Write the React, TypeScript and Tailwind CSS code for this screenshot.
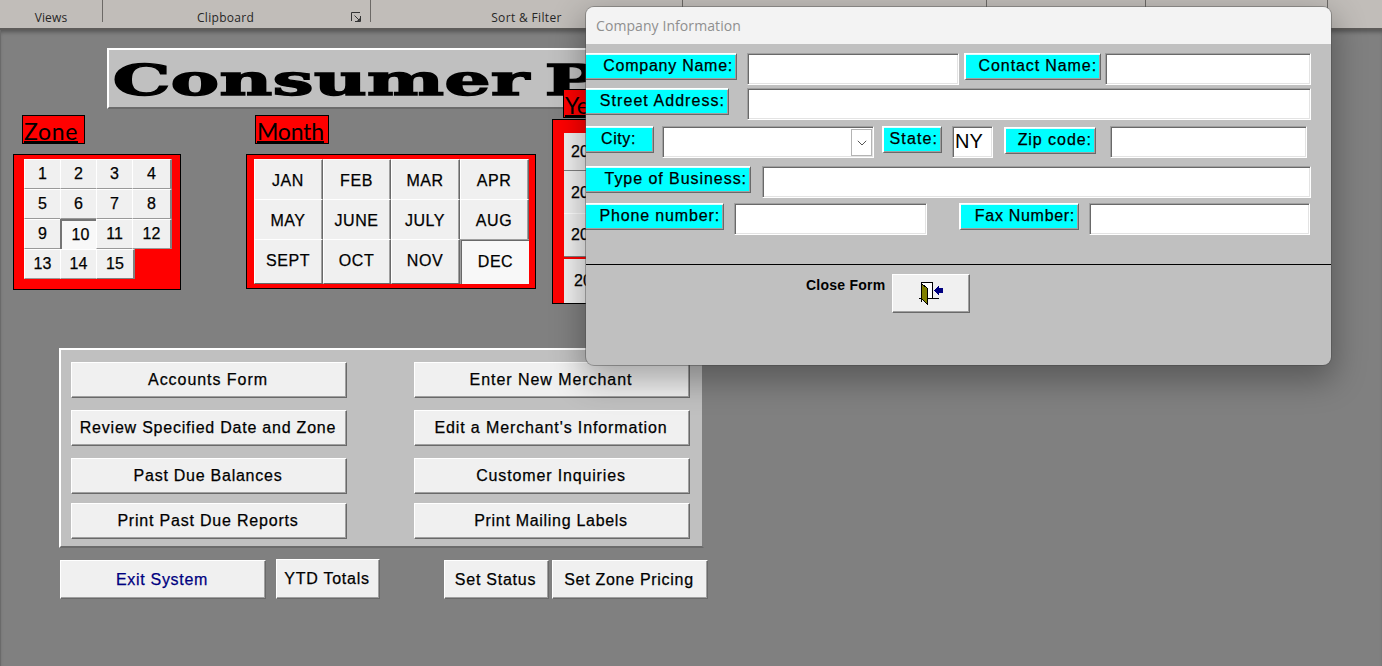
import React from "react";

const stroke = "[-webkit-text-stroke:0.25px_currentColor]";

function PushButton({ label, className = "", text = "" }: { label: string; className?: string; text?: string }) {
  return (
    <button
      className={`flex shrink-0 items-center justify-center whitespace-nowrap border border-t-white border-l-white border-b-[#696969] border-r-[#696969] bg-[#f0f0f0] pr-[2px] text-[16px] leading-none shadow-[inset_-1px_-1px_0_#a0a0a0] ${className}`}
    >
      <span className={`${stroke} ${text}`}>{label}</span>
    </button>
  );
}

function Tag({ label, className = "", text = "" }: { label: string; className?: string; text?: string }) {
  return (
    <div
      className={`flex h-[27px] shrink-0 justify-end whitespace-nowrap border-t border-b border-r border-t-white border-b-[#696969] border-r-[#696969] bg-[#00ffff] pt-px text-[16px] leading-[22px] shadow-[inset_0_1px_0_#d8ffff,inset_-1px_-1px_0_#a0a0a0] ${className}`}
    >
      <span className={`${stroke} ${text}`}>{label}</span>
    </div>
  );
}

function Field({ className = "", children }: { className?: string; children?: React.ReactNode }) {
  return (
    <div
      className={`flex h-[32px] shrink-0 border border-t-[#a0a0a0] border-l-[#a0a0a0] border-b-white border-r-white bg-white shadow-[inset_1px_1px_0_#696969,inset_-1px_-1px_0_#e3e3e3] ${className}`}
    >
      {children}
    </div>
  );
}

function Heading({ label, className = "", text = "" }: { label: string; className?: string; text?: string }) {
  return (
    <div className={`flex h-[29px] items-start overflow-hidden whitespace-nowrap border border-black bg-[#ff0000] pl-px font-['Lato','Liberation_Sans',sans-serif] text-[23px] leading-[30px] ${className}`}>
      <span className={`h-[27px] border-b-2 border-black ${text}`}>{label}</span>
    </div>
  );
}

const months = ["JAN", "FEB", "MAR", "APR", "MAY", "JUNE", "JULY", "AUG", "SEPT", "OCT", "NOV", "DEC"];
const zones = Array.from({ length: 15 }, (_, i) => i + 1);

function monthStyle(m: string) {
  if (m === "DEC")
    return "border-t border-l border-[#a0a0a0] bg-[#f8f8f8] pl-px shadow-[inset_1px_1px_0_#696969]";
  if (m === "SEPT" || m === "OCT" || m === "NOV")
    return "border border-t-white border-l-white border-r-[#696969] border-b-[#696969] bg-[#f0f0f0] pr-px pb-[2px] shadow-[inset_-1px_0_0_#a0a0a0]";
  return "border-t border-l border-r border-t-white border-l-white border-r-[#696969] bg-[#f0f0f0] pt-[2px] pr-px shadow-[inset_-1px_0_0_#a0a0a0]";
}

function zoneStyle(z: number) {
  if (z === 10)
    return "w-[36px] border-t-2 border-l-2 border-[#757575] bg-[#f8f8f8] pl-[3px]";
  if (z % 4 === 0)
    return "w-[40px] border-t border-l border-b border-r-2 border-t-white border-l-white border-b-[#999] border-r-[#808080] bg-[#f0f0f0]";
  if (z === 15)
    return "w-[39px] border-t border-l border-b border-r-2 border-t-white border-l-white border-b-[#808080] border-r-[#808080] bg-[#f0f0f0]";
  return "w-[36px] border-t border-l border-b border-t-white border-l-white border-b-[#999] bg-[#f0f0f0]";
}

export default function App() {
  return (
    <div className="relative flex h-[666px] w-[1382px] flex-col overflow-hidden bg-[#808080] font-['Liberation_Sans',Arial,sans-serif] text-black">
      <header className="flex h-[30px] shrink-0 border-b-2 border-[#5e5c5a] bg-[#c1bdb9] font-['Open_Sans','Noto_Sans',sans-serif] text-[12px] leading-[35px] tracking-[0.15px] text-[#262626]">
        <div className="h-[22px] w-[103px] border-r border-[#6c6966] text-center">Views</div>
        <div className="flex h-[22px] w-[268px] border-r border-[#6c6966] pl-[94px]">
          <span className="w-[154px] tracking-[0.3px]">Clipboard</span>
          <svg className="mt-[12px]" width="12" height="11" viewBox="0 0 12 11" fill="none" stroke="#333" strokeWidth="1">
            <path d="M.5 9V.5H9M3.500 3.500l5 5M9.500 4v5.500H4M6.500 8.500h2V6.500" />
          </svg>
        </div>
        <div className="h-[22px] w-[312px] border-r border-[#6c6966] text-center tracking-[0.35px]">Sort &amp; Filter</div>
        <div className="h-[22px] w-[304px] border-r border-[#6c6966]" />
        <div className="h-[22px] w-[159px] border-r border-[#6c6966]" />
        <div className="h-[22px] w-[182px] border-r border-[#6c6966]" />
      </header>

      <main className="flex w-full flex-1 flex-col border-l border-[#6a6a6a] shadow-[inset_0_4px_4px_-2px_rgba(0,0,0,0.35)]">
        <div className="mt-[18px] ml-[106px] h-[61px] w-[620px] shrink-0 overflow-hidden whitespace-nowrap border-2 border-t-white border-l-white border-b-[#6b6b6b] border-r-[#6b6b6b] bg-[#c0c0c0]">
          <div className="w-[400px] origin-left scale-x-[1.7] pl-[2px] font-['DejaVu_Serif',serif] text-[43px] leading-[61px] font-bold [word-spacing:-6px] [-webkit-text-stroke:1.3px_black]">
            Consumer P
          </div>
        </div>

        <section className="flex h-[239px] shrink-0">
          <div className="ml-[12px] w-[233px] pt-[6px]">
            <Heading label="Zone" className="ml-[9px] w-[63px]" text="tracking-[0.7px]" />
            <div className="mt-[10px] h-[136px] w-[168px] border border-black bg-[#ff0000] pt-[4px] pl-[10px]">
              <div className={`flex w-[148px] flex-wrap text-[16px] ${stroke}`}>
                {zones.map((z) => (
                  <button key={z} className={`flex h-[30px] items-center justify-center ${zoneStyle(z)}`}>
                    {z}
                  </button>
                ))}
              </div>
            </div>
          </div>
          <div className="w-[306px] pt-[6px]">
            <Heading label="Month" className="ml-[9px] w-[74px]" text="tracking-[-0.2px]" />
            <div className="mt-[10px] h-[135px] w-[290px] border border-black bg-[#ff0000] pt-[4px] pl-[7px]">
              <div className={`grid grid-cols-[69px_68px_69px_69px] grid-rows-[40px_40px_45px] text-[16px] tracking-[0.55px] ${stroke}`}>
                {months.map((m) => (
                  <button key={m} className={monthStyle(m)}>
                    {m}
                  </button>
                ))}
              </div>
            </div>
          </div>
          <div className="relative -mt-[20px] w-[140px]">
            <Heading label="Year" className="ml-[11px] w-[63px]" />
            <div className={`mt-px h-[185px] w-[120px] border border-black bg-[#ff0000] pt-[13px] pl-[11px] text-[16px] ${stroke}`}>
              <div className="h-[38px] border-b border-[#808080] bg-[#f0f0f0] pt-[7px] pl-[7px]">2020</div>
              <div className="h-[43px] border-b border-white bg-[#f0f0f0] pt-[10px] pl-[7px]">2021</div>
              <div className="h-[43px] border-b border-[#808080] bg-[#f0f0f0] pt-[9px] pl-[7px]">2022</div>
              <div className="mt-[2px] h-[44px] bg-[#f0f0f0] pt-[10px] pl-[10px]">2023</div>
            </div>
          </div>
        </section>

        <section className="ml-[58px] grid h-[200px] w-[645px] shrink-0 grid-cols-[343px_276px] grid-rows-[48px_48px_45px_37px] border-2 border-t-white border-l-white border-b-[#6b6b6b] border-r-[#808080] bg-[#c0c0c0] pt-[12px] pl-[10px]">
          <PushButton label="Accounts Form" className="h-[36px] w-[276px]" text="tracking-[0.95px]" />
          <PushButton label="Enter New Merchant" className="h-[36px] w-[276px]" text="tracking-[0.95px]" />
          <PushButton label="Review Specified Date and Zone" className="h-[36px] w-[276px]" text="tracking-[0.78px]" />
          <PushButton label="Edit a Merchant's Information" className="h-[36px] w-[276px]" text="tracking-[0.88px]" />
          <PushButton label="Past Due Balances" className="h-[36px] w-[276px]" text="tracking-[0.75px]" />
          <PushButton label="Customer Inquiries" className="h-[36px] w-[276px]" text="tracking-[0.85px]" />
          <PushButton label="Print Past Due Reports" className="h-[36px] w-[276px]" text="tracking-[0.8px]" />
          <PushButton label="Print Mailing Labels" className="h-[36px] w-[276px]" text="tracking-[0.7px]" />
        </section>

        <section className="mt-[11px] ml-[59px] flex">
          <PushButton label="Exit System" className="mt-[1px] h-[39px] w-[206px] text-[#000080]" text="tracking-[0.7px]" />
          <PushButton label="YTD Totals" className="ml-[10px] h-[40px] w-[104px]" text="tracking-[0.75px]" />
          <PushButton label="Set Status" className="mt-[1px] ml-[64px] h-[39px] w-[105px]" text="tracking-[0.75px]" />
          <PushButton label="Set Zone Pricing" className="mt-[1px] ml-[3px] h-[39px] w-[156px]" text="tracking-[0.7px]" />
        </section>
      </main>

      <div className="absolute top-[7px] left-[586px] flex h-[358px] w-[745px] flex-col overflow-hidden rounded-[8px] bg-[#c0c0c0] shadow-[0_12px_32px_4px_rgba(0,0,0,0.3),0_0_0_1px_rgba(90,90,90,0.45)]">
        <div className="h-[37px] shrink-0 bg-[#f3f3f3] pl-[10px] font-['Open_Sans','Noto_Sans',sans-serif] text-[14px] leading-[38px] tracking-[0.08px] text-[#8f8f8f]">
          Company Information
        </div>
        <div className="flex h-[35px] shrink-0 pt-[9px]">
          <Tag label="Company Name:" className="w-[151px] pr-[3px]" text="tracking-[0.75px]" />
          <Field className="ml-[10px] w-[212px]" />
          <Tag label="Contact Name:" className="ml-[5px] w-[137px] border-l-2 border-l-white pr-[3px]" text="tracking-[0.9px]" />
          <Field className="ml-[4px] w-[206px]" />
        </div>
        <div className="flex h-[38px] shrink-0 pt-[9px]">
          <Tag label="Street Address:" className="w-[143px] pr-[3px]" text="tracking-[1.05px]" />
          <Field className="ml-[18px] w-[564px]" />
        </div>
        <div className="flex h-[40px] shrink-0 pt-[9px]">
          <Tag label="City:" className="w-[68px] pr-[17px]" text="tracking-[0.6px]" />
          <Field className="ml-[8px] w-[212px] justify-end pr-px">
            <div className="mt-[2px] flex h-[27px] w-[21px] items-center justify-center border border-[#b4b4b4]">
              <svg width="10" height="6" viewBox="0 0 10 6" fill="none" stroke="#555">
                <path d="M.8.8 5 5 9.200.8" />
              </svg>
            </div>
          </Field>
          <Tag label="State:" className="ml-[8px] w-[60px] border-l-2 border-l-white pr-[3px]" text="tracking-[1.1px]" />
          <Field className="ml-[10px] w-[41px] pl-[2px] text-[20px] leading-[28px]">NY</Field>
          <Tag label="Zip code:" className="mt-px ml-[11px] w-[92px] border-l-2 border-l-white pr-[3px]" text="tracking-[0.95px]" />
          <Field className="ml-[14px] w-[197px]" />
        </div>
        <div className="flex h-[37px] shrink-0 pt-[9px]">
          <Tag label="Type of Business:" className="w-[165px] pr-[3px]" text="tracking-[0.95px]" />
          <Field className="ml-[11px] w-[549px]" />
        </div>
        <div className="flex h-[71px] shrink-0 border-b border-black pt-[9px]">
          <Tag label="Phone number:" className="w-[138px] pr-[3px]" text="tracking-[0.85px]" />
          <Field className="ml-[10px] w-[193px]" />
          <Tag label="Fax Number:" className="ml-[32px] w-[120px] border-l-2 border-l-white pr-[3px]" text="tracking-[0.7px]" />
          <Field className="ml-[10px] w-[221px]" />
        </div>
        <div className="flex pt-[9px] pl-[220px]">
          <span className="w-[86px] pt-[2px] text-[14px] leading-[18px] font-bold tracking-[0.25px] whitespace-nowrap">Close Form</span>
          <button className="h-[39px] w-[78px] border border-t-white border-l-white border-r-[#696969] border-b-[#696969] bg-[#f0f0f0] pl-[26px] shadow-[inset_-1px_-1px_0_#a0a0a0]">
            <svg width="26" height="26" viewBox="0 0 26 26" shapeRendering="crispEdges">
              <path d="M3 2h11v15H3z" fill="white" />
              <path d="M2 1h12v1H2zM13 1h1v16h-1zM0 17h2v1H0zM8 17h12v1H8zM2 1h1v20h-1z" fill="black" />
              <path d="M2.500 2.500l6 5v16l-6-6z" fill="#808000" stroke="black" />
              <path d="M15 9l5-5v3h4v5h-4v3z" fill="#000080" />
            </svg>
          </button>
        </div>
      </div>
    </div>
  );
}
